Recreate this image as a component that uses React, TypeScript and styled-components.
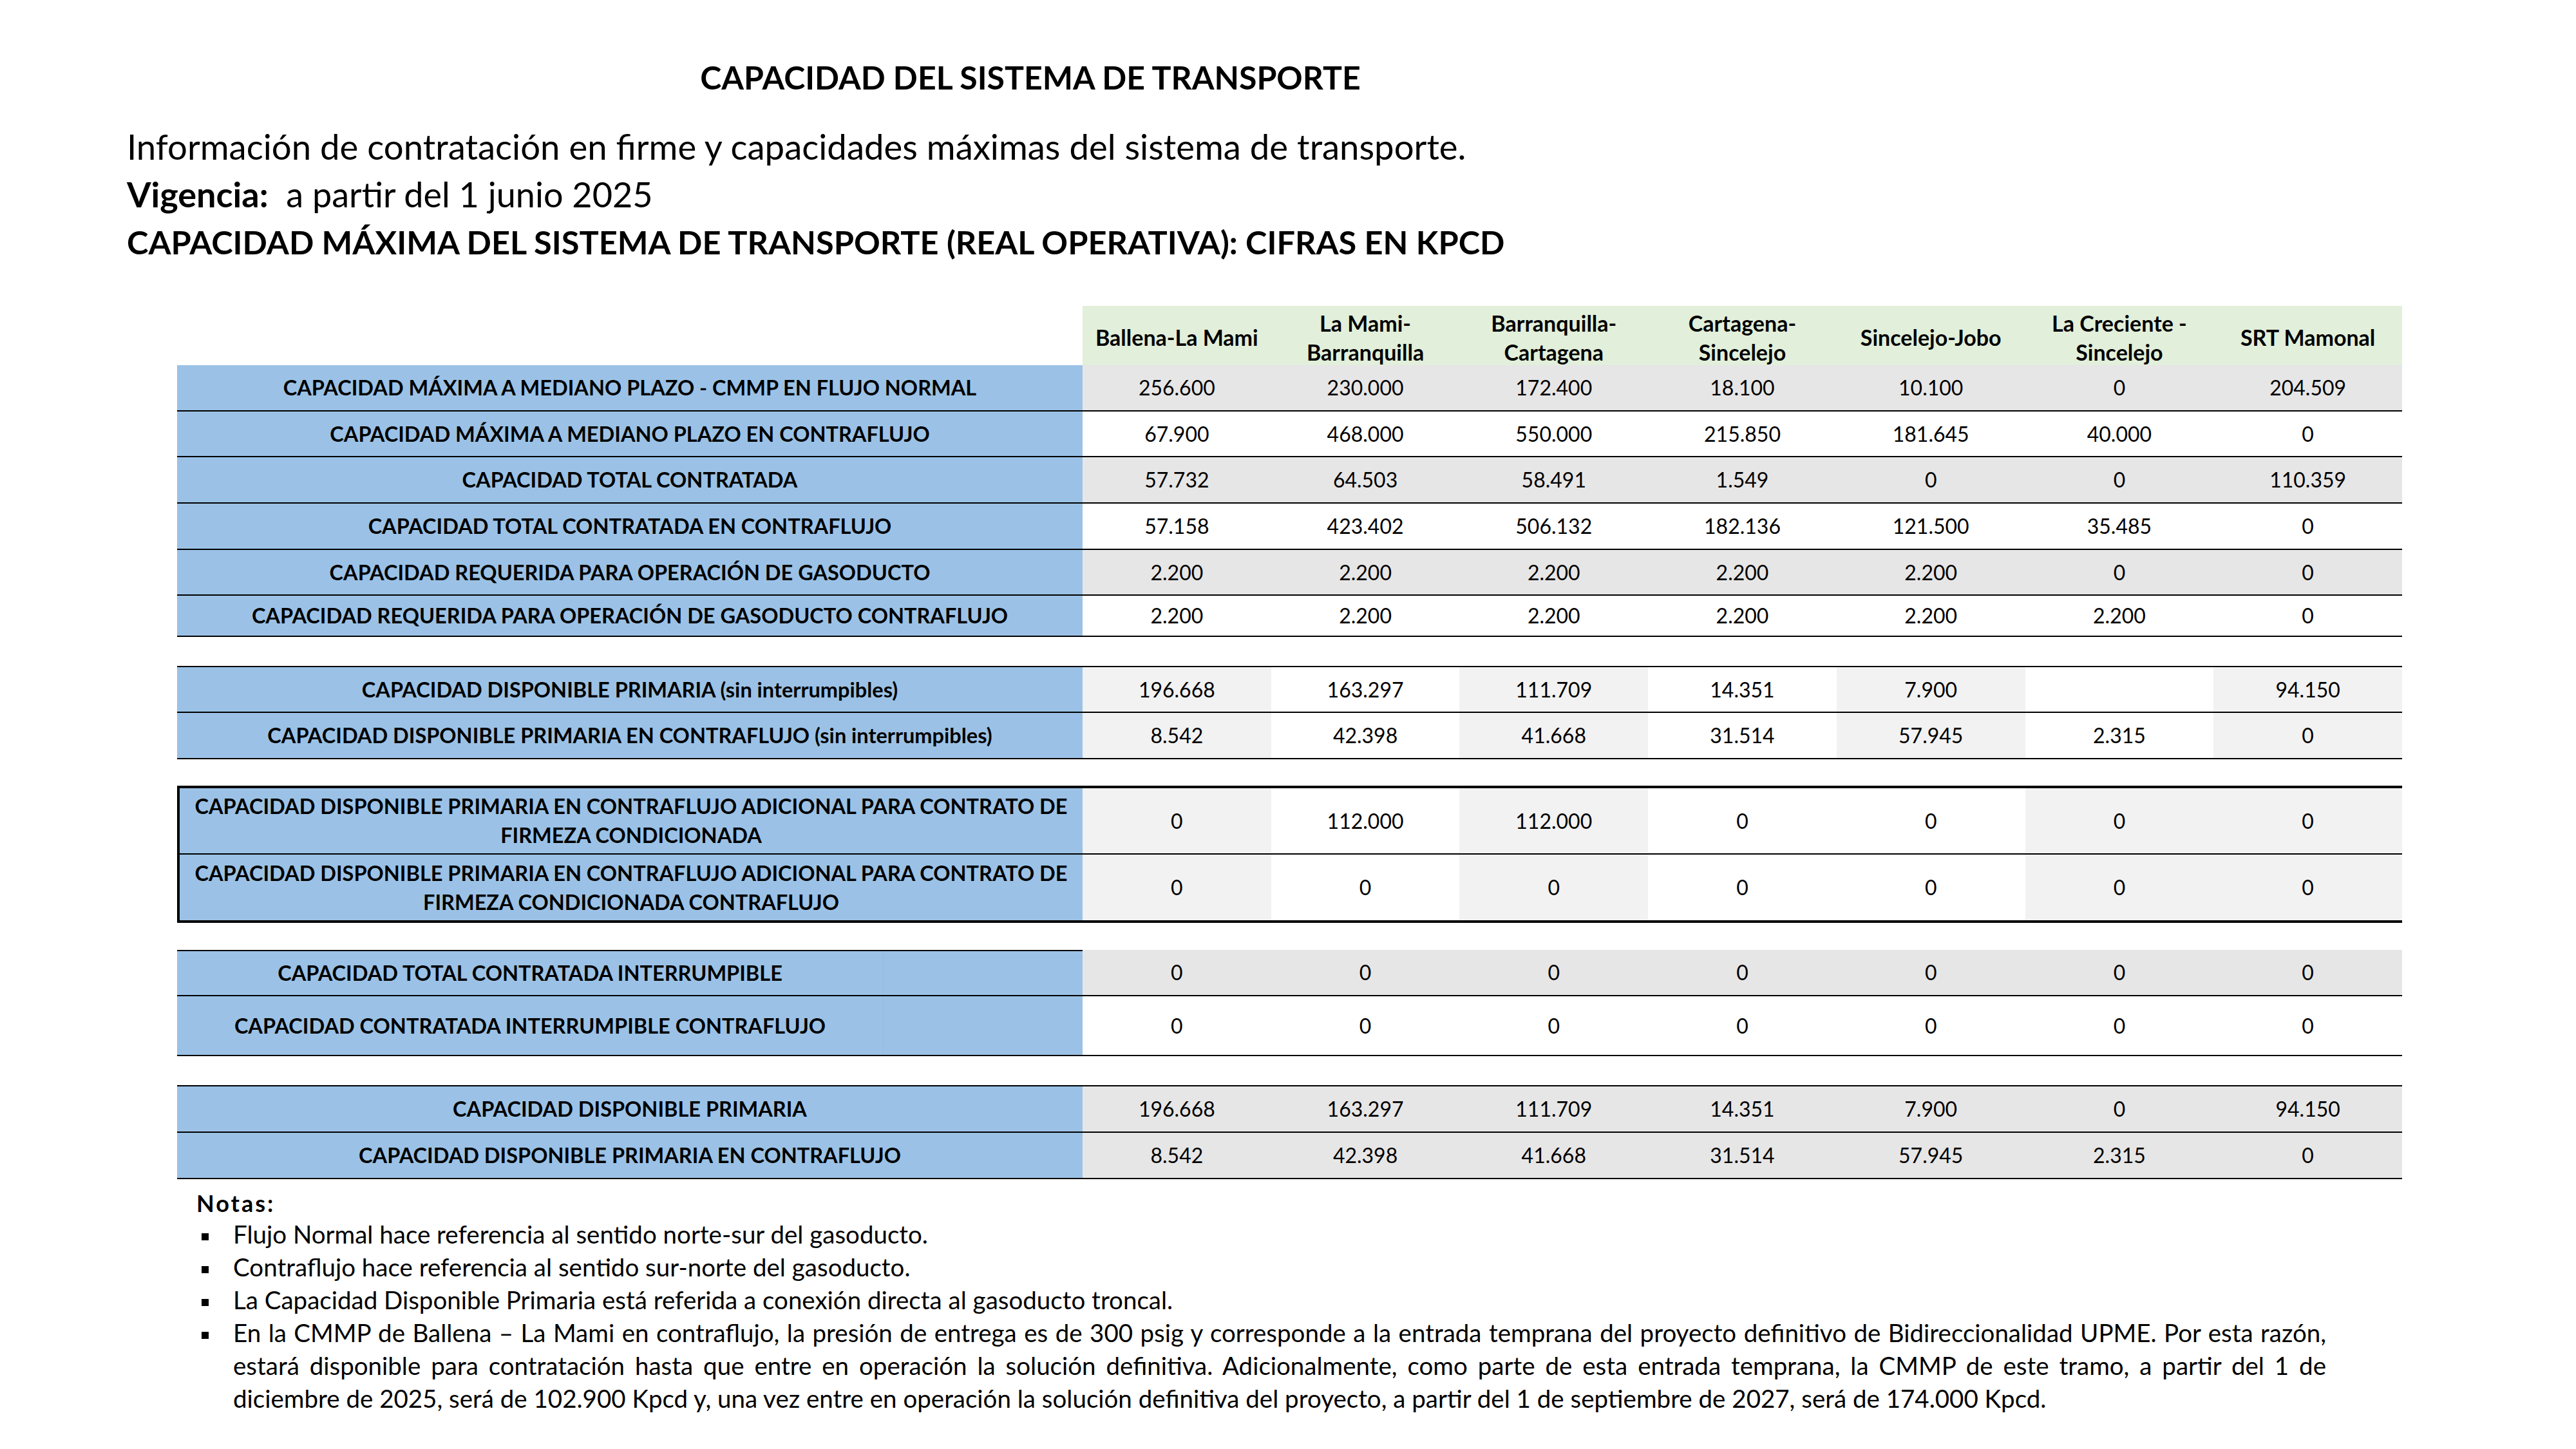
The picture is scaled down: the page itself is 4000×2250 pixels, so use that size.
import React from 'react';
import styled, { createGlobalStyle } from 'styled-components';

const GlobalStyle = createGlobalStyle`
  html, body { margin: 0; padding: 0; background: #ffffff; }
  body {
    width: 4000px;
    height: 2250px;
    overflow: hidden;
    font-family: "Lato", "Liberation Sans", sans-serif;
    color: #000000;
  }
`;

const G = '#E7E6E6';
const L = '#F2F2F2';
const W = '#FFFFFF';

const Page = styled.div`
  width: 4000px;
  height: 2250px;
  box-sizing: border-box;
  padding-top: 90px;
  background: #ffffff;
`;

const Heading = styled.h1`
  margin: 0 0 0 197px;
  width: 2806px;
  text-align: center;
  font-weight: 700;
  font-size: 50px;
  line-height: 60px;
`;

const Intro = styled.div`
  margin-top: 40px;
  padding-left: 197px;
  line-height: 74.5px;
`;

const IntroLine = styled.div<{ $bold?: boolean; $size: number }>`
  font-weight: ${(p) => (p.$bold ? 700 : 400)};
  font-size: ${(p) => p.$size}px;
  white-space: pre;
`;

const Strong = styled.span`
  font-weight: 700;
`;

const Table = styled.div`
  margin-top: 61px;
  margin-left: 275px;
  width: 3455px;
`;

const HeaderRow = styled.div`
  display: grid;
  grid-template-columns: 1406px repeat(7, 1fr);
  height: 92px;
`;

const HeaderBlank = styled.div`
  background: #ffffff;
`;

const HeaderCell = styled.div`
  background: #e2efda;
  display: flex;
  align-items: center;
  justify-content: center;
  text-align: center;
  font-weight: 700;
  font-size: 34px;
  line-height: 45px;
  padding-top: 4px;
  box-sizing: border-box;
  white-space: nowrap;
`;

const Section = styled.div<{ $gap: number; $top: number; $framed?: boolean }>`
  margin-top: ${(p) => p.$gap}px;
  border-top: ${(p) => (p.$top ? `${p.$top}px solid #000` : 'none')};
  border-bottom: ${(p) => (p.$framed ? '4px solid #000' : 'none')};
  border-left: ${(p) => (p.$framed ? '4px solid #000' : 'none')};
`;

const Row = styled.div<{ $h: number; $label: number; $line: boolean }>`
  display: grid;
  grid-template-columns: ${(p) => p.$label}px repeat(7, 1fr);
  height: ${(p) => p.$h}px;
  box-sizing: border-box;
  border-bottom: ${(p) => (p.$line ? '2px solid #000' : 'none')};
`;

const LabelCell = styled.div<{ $topLine?: boolean }>`
  background: #9bc2e6;
  display: flex;
  align-items: stretch;
  box-sizing: border-box;
  min-width: 0;
  border-top: ${(p) => (p.$topLine ? '2px solid #000' : 'none')};
`;

const LabelText = styled.div<{ $w?: number }>`
  flex: ${(p) => (p.$w ? `0 0 ${p.$w}px` : '1 1 auto')};
  min-width: 0;
  display: flex;
  align-items: center;
  justify-content: center;
  text-align: center;
  font-weight: 700;
  font-size: 32.5px;
  line-height: 45px;
  white-space: nowrap;
`;

const LabelBlank = styled.div`
  flex: 1 1 auto;
  border-left: 1px solid rgba(60, 100, 140, 0.06);
`;

const DataCell = styled.div<{ $bg: string }>`
  background: ${(p) => p.$bg};
  display: flex;
  align-items: center;
  justify-content: center;
  font-size: 32px;
  white-space: nowrap;
`;

const Notes = styled.div`
  margin-top: 17px;
  padding-left: 305px;
  width: 3612px;
  box-sizing: border-box;
`;

const NotesTitle = styled.div`
  font-weight: 700;
  font-size: 36px;
  line-height: 40px;
  letter-spacing: 3px;
`;

const BulletList = styled.ul`
  list-style: none;
  margin: 3px 0 0 0;
  padding: 0 0 0 8px;
`;

const Bullet = styled.li`
  display: flex;
  font-size: 38.5px;
  line-height: 51px;
`;

const Marker = styled.span`
  flex: 0 0 49px;
  display: flex;
  align-items: flex-start;
  &::before {
    content: '';
    display: block;
    width: 11px;
    height: 11px;
    margin-top: 24px;
    background: #000;
  }
`;

const BulletText = styled.div`
  flex: 1 1 auto;
  min-width: 0;
`;

const JustLine = styled.div<{ $justify?: boolean }>`
  text-align: ${(p) => (p.$justify ? 'justify' : 'left')};
  text-align-last: ${(p) => (p.$justify ? 'justify' : 'left')};
`;

type RowDef = {
  label: React.ReactNode;
  values: string[];
  h: number;
  shades: string[];
  line?: boolean;
  split?: boolean;
  topLine?: boolean;
};

type SectionDef = {
  gap: number;
  top: number;
  framed?: boolean;
  rows: RowDef[];
};

const all = (c: string) => [c, c, c, c, c, c, c];
const ALT = [L, W, L, W, L, W, L];
const FRAMED = [L, W, L, W, W, L, L];

const headers: React.ReactNode[] = [
  'Ballena-La Mami',
  <>La Mami-<br />Barranquilla</>,
  <>Barranquilla-<br />Cartagena</>,
  <>Cartagena-<br />Sincelejo</>,
  'Sincelejo-Jobo',
  <>La Creciente -<br />Sincelejo</>,
  'SRT Mamonal',
];

const sections: SectionDef[] = [
  {
    gap: 0,
    top: 0,
    rows: [
      {
        label: 'CAPACIDAD MÁXIMA A MEDIANO PLAZO - CMMP EN FLUJO NORMAL',
        values: ['256.600', '230.000', '172.400', '18.100', '10.100', '0', '204.509'],
        h: 72,
        shades: all(G),
      },
      {
        label: 'CAPACIDAD MÁXIMA A MEDIANO PLAZO EN CONTRAFLUJO',
        values: ['67.900', '468.000', '550.000', '215.850', '181.645', '40.000', '0'],
        h: 71,
        shades: all(W),
      },
      {
        label: 'CAPACIDAD TOTAL CONTRATADA',
        values: ['57.732', '64.503', '58.491', '1.549', '0', '0', '110.359'],
        h: 72,
        shades: all(G),
      },
      {
        label: 'CAPACIDAD TOTAL CONTRATADA EN CONTRAFLUJO',
        values: ['57.158', '423.402', '506.132', '182.136', '121.500', '35.485', '0'],
        h: 72,
        shades: all(W),
      },
      {
        label: 'CAPACIDAD REQUERIDA PARA OPERACIÓN DE GASODUCTO',
        values: ['2.200', '2.200', '2.200', '2.200', '2.200', '0', '0'],
        h: 71,
        shades: all(G),
      },
      {
        label: 'CAPACIDAD REQUERIDA PARA OPERACIÓN DE GASODUCTO CONTRAFLUJO',
        values: ['2.200', '2.200', '2.200', '2.200', '2.200', '2.200', '0'],
        h: 64,
        shades: all(W),
      },
    ],
  },
  {
    gap: 45,
    top: 2,
    rows: [
      {
        label: 'CAPACIDAD DISPONIBLE PRIMARIA (sin interrumpibles)',
        values: ['196.668', '163.297', '111.709', '14.351', '7.900', '', '94.150'],
        h: 71,
        shades: ALT,
      },
      {
        label: 'CAPACIDAD DISPONIBLE PRIMARIA EN CONTRAFLUJO (sin interrumpibles)',
        values: ['8.542', '42.398', '41.668', '31.514', '57.945', '2.315', '0'],
        h: 72,
        shades: ALT,
      },
    ],
  },
  {
    gap: 41,
    top: 4,
    framed: true,
    rows: [
      {
        label: (
          <>
            CAPACIDAD DISPONIBLE PRIMARIA EN CONTRAFLUJO ADICIONAL PARA CONTRATO DE
            <br />
            FIRMEZA CONDICIONADA
          </>
        ),
        values: ['0', '112.000', '112.000', '0', '0', '0', '0'],
        h: 103,
        shades: FRAMED,
      },
      {
        label: (
          <>
            CAPACIDAD DISPONIBLE PRIMARIA EN CONTRAFLUJO ADICIONAL PARA CONTRATO DE
            <br />
            FIRMEZA CONDICIONADA CONTRAFLUJO
          </>
        ),
        values: ['0', '0', '0', '0', '0', '0', '0'],
        h: 102,
        shades: FRAMED,
        line: false,
      },
    ],
  },
  {
    gap: 42,
    top: 0,
    rows: [
      {
        label: 'CAPACIDAD TOTAL CONTRATADA INTERRUMPIBLE',
        values: ['0', '0', '0', '0', '0', '0', '0'],
        h: 72,
        shades: all(G),
        split: true,
        topLine: true,
      },
      {
        label: 'CAPACIDAD CONTRATADA INTERRUMPIBLE CONTRAFLUJO',
        values: ['0', '0', '0', '0', '0', '0', '0'],
        h: 93,
        shades: all(W),
        split: true,
      },
    ],
  },
  {
    gap: 45,
    top: 2,
    rows: [
      {
        label: 'CAPACIDAD DISPONIBLE PRIMARIA',
        values: ['196.668', '163.297', '111.709', '14.351', '7.900', '0', '94.150'],
        h: 72,
        shades: all(G),
      },
      {
        label: 'CAPACIDAD DISPONIBLE PRIMARIA EN CONTRAFLUJO',
        values: ['8.542', '42.398', '41.668', '31.514', '57.945', '2.315', '0'],
        h: 72,
        shades: all(G),
      },
    ],
  },
];

export default function App() {
  return (
    <>
      <GlobalStyle />
      <Page>
        <Heading>CAPACIDAD DEL SISTEMA DE TRANSPORTE</Heading>
        <Intro>
          <IntroLine $size={54.5}>Información de contratación en firme y capacidades máximas del sistema de transporte.</IntroLine>
          <IntroLine $size={54}>
            <Strong>Vigencia:</Strong>{'  a partir del 1 junio 2025'}
          </IntroLine>
          <IntroLine $bold $size={50.5}>CAPACIDAD MÁXIMA DEL SISTEMA DE TRANSPORTE (REAL OPERATIVA): CIFRAS EN KPCD</IntroLine>
        </Intro>

        <Table>
          <HeaderRow>
            <HeaderBlank />
            {headers.map((h, i) => (
              <HeaderCell key={i}>
                <span>{h}</span>
              </HeaderCell>
            ))}
          </HeaderRow>
          {sections.map((s, si) => (
            <Section key={si} $gap={s.gap} $top={s.top} $framed={s.framed}>
              {s.rows.map((r, ri) => (
                <Row key={ri} $h={r.h} $label={s.framed ? 1402 : 1406} $line={r.line !== false}>
                  <LabelCell $topLine={r.topLine}>
                    <LabelText $w={r.split ? 1096 : undefined}>
                      <span>{r.label}</span>
                    </LabelText>
                    {r.split && <LabelBlank />}
                  </LabelCell>
                  {r.values.map((v, vi) => (
                    <DataCell key={vi} $bg={r.shades[vi]}>
                      {v}
                    </DataCell>
                  ))}
                </Row>
              ))}
            </Section>
          ))}
        </Table>

        <Notes>
          <NotesTitle>Notas:</NotesTitle>
          <BulletList>
            <Bullet>
              <Marker />
              <BulletText>Flujo Normal hace referencia al sentido norte-sur del gasoducto.</BulletText>
            </Bullet>
            <Bullet>
              <Marker />
              <BulletText>Contraflujo hace referencia al sentido sur-norte del gasoducto.</BulletText>
            </Bullet>
            <Bullet>
              <Marker />
              <BulletText>La Capacidad Disponible Primaria está referida a conexión directa al gasoducto troncal.</BulletText>
            </Bullet>
            <Bullet>
              <Marker />
              <BulletText>
                <JustLine $justify>
                  En la CMMP de Ballena – La Mami en contraflujo, la presión de entrega es de 300 psig y corresponde a la entrada temprana del proyecto definitivo de Bidireccionalidad UPME. Por esta razón,
                </JustLine>
                <JustLine $justify>
                  estará disponible para contratación hasta que entre en operación la solución definitiva. Adicionalmente, como parte de esta entrada temprana, la CMMP de este tramo, a partir del 1 de
                </JustLine>
                <JustLine>
                  diciembre de 2025, será de 102.900 Kpcd y, una vez entre en operación la solución definitiva del proyecto, a partir del 1 de septiembre de 2027, será de 174.000 Kpcd.
                </JustLine>
              </BulletText>
            </Bullet>
          </BulletList>
        </Notes>
      </Page>
    </>
  );
}
